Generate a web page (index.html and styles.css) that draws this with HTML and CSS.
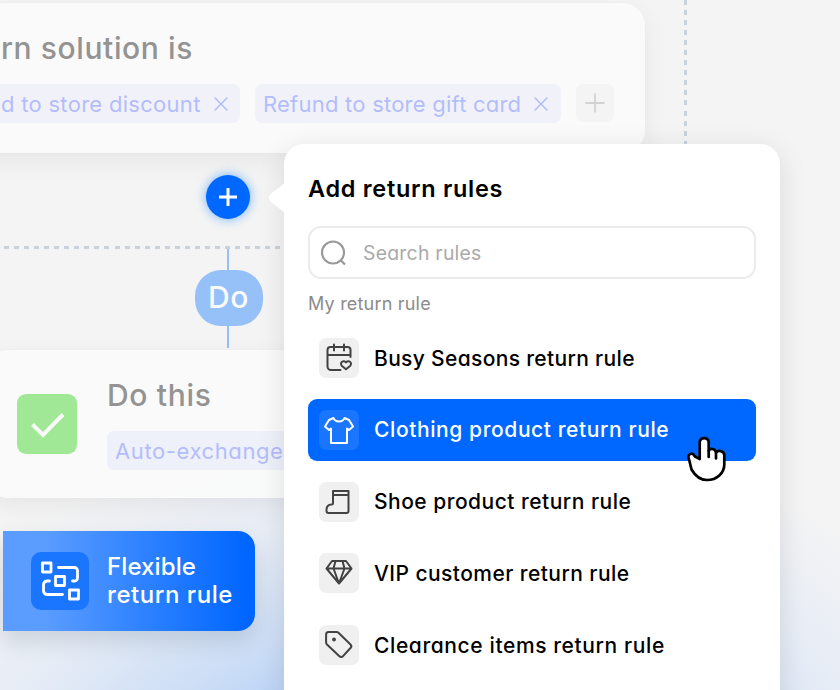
FILE: index.html
```html
<!DOCTYPE html>
<html lang="en">
<head>
<meta charset="utf-8">
<title>Return rules</title>
<link rel="stylesheet" href="styles.css">
</head>
<body>
<main class="canvas">
  <div class="line-v"></div>
  <section class="node solution">
    <h2 class="node-title t-sol">rn solution is</h2>
    <div class="chips">
      <span class="chip"><span class="t-c1">d to store discount</span><svg width="16" height="16" viewBox="0 0 16 16"><path d="M1.5 1.5l13 13M14.5 1.5l-13 13"/></svg></span>
      <span class="chip"><span class="t-c2">Refund to store gift card</span><svg width="16" height="16" viewBox="0 0 16 16"><path d="M1.5 1.5l13 13M14.5 1.5l-13 13"/></svg></span>
      <span class="chip-add"><svg width="20" height="20" viewBox="0 0 20 20"><path d="M10 .5v19M.5 10h19"/></svg></span>
    </div>
  </section>
  <div class="line-h"></div>
  <div class="stem"></div>
  <div class="add"><svg width="18" height="18" viewBox="0 0 18 18"><path d="M9 0v18M0 9h18"/></svg></div>
  <div class="do"><span class="t-do">Do</span></div>
  <section class="node action">
    <div class="check"><svg width="60" height="60" viewBox="0 0 60 60"><path d="M15.500 30.500L26 41l20-20.500"/></svg></div>
    <div class="action-body">
      <h2 class="node-title t-this">Do this</h2>
      <span class="chip"><span class="t-c3">Auto-exchange</span></span>
    </div>
  </section>
  <div class="banner">
    <div class="banner-icon">
      <svg width="58" height="58" viewBox="0 0 58 58"><path d="M11.500 11h8.500v9h-8.500zM24.500 24.500h9v9h-9zM38.500 38h9v9h-9zM27.500 15.500H43.500a3 3 0 0 1 3 3v7a3 3 0 0 1-3 3.500H41.500M18.500 29H16a4 4 0 0 0-3.500 4v6a4 4 0 0 0 4 3.500H31.500"/></svg>
    </div>
    <p class="banner-text"><span class="t-flex">Flexible</span><span class="t-rr">return rule</span></p>
  </div>

  <aside class="popover">
    <svg class="pointer" width="18" height="32" viewBox="0 0 18 32"><path d="M18 1L4 11.500Q-.5 16 4 20L18 31z"/></svg>
    <h1 class="title"><span class="t-title">Add return rules</span></h1>
    <div class="search">
      <svg width="28" height="28" viewBox="0 0 28 28"><circle cx="13" cy="13.500" r="11"/><path d="M20.500 21l4.500 4.500"/></svg>
      <span class="t-search">Search rules</span>
    </div>
    <p class="label"><span class="t-label">My return rule</span></p>
    <ul class="rules">
      <li class="rule">
        <span class="icon"><svg width="40" height="40" viewBox="0 0 40 40"><path d="M31.500 19v-7a3 3 0 0 0-3-3h-17a3 3 0 0 0-3 3v16.500a3.500 3.500 0 0 0 3.500 3.500h9.500M8.500 17h23M15 6.500v6M25 6.500v6"/><path d="M27 31.300l-4.300-3.600c-2.400-3 2-6.300 4.300-3.200 2.300-3.100 6.700.2 4.300 3.200z"/></svg></span>
        <span class="t-r1">Busy Seasons return rule</span>
      </li>
      <li class="rule active">
        <span class="icon"><svg width="40" height="40" viewBox="0 0 40 40"><path d="M14.500 8l-4.500 2-4 6.500 4 3.500 2-1.500V33h16V18.500l2 1.500 4-3.500-4-6.500-4.500-2c-1.500 4.600-9.500 4.600-11 0z"/></svg></span>
        <span class="t-r2">Clothing product return rule</span>
      </li>
      <li class="rule">
        <span class="icon"><svg width="40" height="40" viewBox="0 0 40 40"><path d="M14 9h15.500V29a2 2 0 0 1-2 2H9.500a2 2 0 0 1-2-2v-1c0-3.500 2-5.500 5-5.500 1 0 1.500-.5 1.500-1.500zM14 13h15.500"/></svg></span>
        <span class="t-r3">Shoe product return rule</span>
      </li>
      <li class="rule">
        <span class="icon"><svg width="40" height="40" viewBox="0 0 40 40"><path d="M13 8h14l5.500 7.500L20 30.500 7.500 15.500zM7.500 15.500h25M16.500 8l-2 7.500L20 30.500l5.500-15-2-7.500"/></svg></span>
        <span class="t-r4">VIP customer return rule</span>
      </li>
      <li class="rule">
        <span class="icon"><svg width="40" height="40" viewBox="0 0 40 40"><path d="M9.500 7H17.500a3 3 0 0 1 2 .8L31.500 19.500a2.500 2.500 0 0 1 0 3.500l-7.500 8.200a2.500 2.500 0 0 1-3.600 0L8 19.500a3 3 0 0 1-.9-2V9.500A2.500 2.500 0 0 1 9.500 7z"/><circle class="dot" cx="15" cy="14.500" r="1.900"/></svg></span>
        <span class="t-r5">Clearance items return rule</span>
      </li>
    </ul>
  </aside>
  <svg class="cursor" width="44" height="50" viewBox="0 0 44 50"><path d="M15.700 27V10.300c0-5.700 9-5.700 9 0V19c1.200-3.400 6.800-2.600 7.300 1.700 1.800-2.900 8.300-2 8.300 2.600v9.200c0 8.500-7.500 15.500-17.300 15.500-7 0-12-4.500-15.500-10.500L5.200 28C2.700 22 8 19.500 11 24.500z"/><path class="fingers" d="M24.700 25v-6M32 26.500v-5"/></svg>
</main>
</body>
</html>
```
FILE: styles.css
```css
* { box-sizing: border-box; }
body {
  margin: 0;
  font-family: Inter, "Open Sans", sans-serif;
  font-feature-settings: "cv11";
  white-space: nowrap;
}
h1, h2, p, ul { margin: 0; padding: 0; }
svg { display: block; flex: none; fill: none; stroke: currentColor; }

.canvas {
  position: relative;
  width: 840px;
  height: 690px;
  overflow: hidden;
  background: radial-gradient(ellipse 600px 400px at 430px 820px, #8bb8fa 0%, #a5c7f8 25%, #cbddf6 50%, #e6ecf6 74%, #f4f4f4 100%);
}

/* Diagram */
.line-v {
  position: absolute; left: 684px; top: 0; width: 3px; height: 150px;
  background: repeating-linear-gradient(#c9d1db 0 5px, transparent 5px 10.050px);
}
.line-h {
  position: absolute; left: 4px; top: 246px; width: 284px; height: 3px;
  background: repeating-linear-gradient(90deg, #c9d1db 0 5px, transparent 5px 10.050px);
}
.stem { position: absolute; left: 227px; top: 249px; width: 2px; height: 99px; background: #95c1f8; }
.node {
  position: absolute;
  background: rgba(251, 251, 251, .82);
  box-shadow: 0 8px 26px rgba(0, 0, 0, .06), 0 0 2px rgba(0, 0, 0, .04);
}
.node-title { font-weight: 500; font-size: 30px; line-height: 40px; color: #939393; }
.solution { left: -30px; top: 3px; width: 675px; height: 150px; border-radius: 22px; padding: 25px 0 0 31px; }
.chips { display: flex; gap: 15px; margin-top: 16px; }
.chip {
  display: flex; align-items: center; justify-content: space-between;
  width: 306px; height: 39px; padding: 0 12px 0 8px;
  border-radius: 7px; background: #f1f2f9; color: #b4bdfb; font-size: 22px;
}
.chips .chip:first-child { width: 254px; margin-left: -15px; padding: 0 11px 0 15px; }
.chip svg { stroke-width: 1.500; }
.chip-add {
  display: flex; align-items: center; justify-content: center;
  width: 38px; height: 38px; border-radius: 7px; background: #f4f4f4; color: #d2d2d2;
}
.chip-add svg { stroke-width: 1.800; }
.add {
  position: absolute; left: 206px; top: 175px; width: 44px; height: 44px; border-radius: 50%;
  display: flex; align-items: center; justify-content: center;
  background: #0068ff; color: #fff; stroke-width: 3;
  box-shadow: 0 0 11px rgba(40, 140, 255, .65);
}
.do {
  position: absolute; left: 195px; top: 270px; width: 68px; height: 56px; border-radius: 26px;
  display: flex; align-items: center; padding: 0 0 2px 13px;
  background: #95c1f8; color: #fafafa; font-size: 30px; font-weight: 500;
}
.action { left: -10px; top: 350px; width: 500px; height: 148px; border-radius: 18px; display: flex; padding: 0 0 0 27px; }
.check { width: 60px; height: 60px; margin-top: 44px; border-radius: 9px; background: #a0e896; color: #fafafa; stroke-width: 4; }
.action-body { padding: 25px 0 0 30px; }
.action-body .chip { margin-top: 16px; background: #eef0fa; }
.banner {
  position: absolute; left: 3px; top: 531px; width: 252px; height: 100px; border-radius: 0 17px 17px 0;
  display: flex; align-items: center; gap: 18px; padding-left: 28px;
  background: linear-gradient(90deg, #5a9cff 17%, #0066ff 97%); color: #fff;
  box-shadow: 0 10px 22px rgba(50, 70, 90, .17);
}
.banner-icon { width: 58px; height: 58px; border-radius: 10px; background: #1a75ff; }
.banner-icon svg { stroke-width: 2.800; stroke-linecap: round; stroke-linejoin: round; }
.banner-text { font-size: 24px; line-height: 28.500px; font-weight: 500; }
.banner-text span { display: block; }

/* Popover */
.popover {
  position: absolute; left: 284px; top: 144px; width: 496px; height: 580px;
  padding: 24px 24px 0; border-radius: 20px; background: #fff;
  box-shadow: 0 6px 28px rgba(0, 0, 0, .11);
}
.pointer { position: absolute; left: -17px; top: 38px; fill: #fff; stroke: none; }
.title { font-size: 23.500px; font-weight: 600; line-height: 41px; color: #000; }
.search {
  display: flex; align-items: center; gap: 15px; height: 53px; margin-top: 17px; padding-left: 10px;
  border: 2px solid #ebebeb; border-radius: 13px; color: #aaa; font-size: 19.400px;
}
.search svg { color: #999; stroke-width: 2.200; }
.label { margin-top: 11px; font-size: 18px; line-height: 27px; color: #8b8b8b; }
.rules { list-style: none; display: flex; flex-direction: column; gap: 9.800px; margin-top: 10px; }
.rule {
  display: flex; align-items: center; gap: 15px; height: 62px; padding-left: 11px;
  border-radius: 9px; color: #000; font-size: 21px; font-weight: 500;
}
.icon { width: 40px; height: 40px; border-radius: 7px; background: #f0f0f0; color: #424242; }
.icon svg { stroke-width: 2; stroke-linejoin: round; stroke-linecap: round; }
.dot { fill: currentColor; stroke: none; }
.active { background: #0068ff; color: #fff; }
.active .icon { background: #1a75ff; color: #fff; }
.cursor { position: absolute; left: 684px; top: 432px; fill: #fff; stroke: #000; stroke-width: 2.700; stroke-linejoin: round; stroke-linecap: round; }

/* Tracking */
.t-sol { letter-spacing: .600px; }
.t-c1 { letter-spacing: .29px; }
.t-c2 { letter-spacing: .23px; }
.t-c3 { letter-spacing: .6px; }
.t-do { letter-spacing: .700px; }
.t-this { letter-spacing: .680px; }
.t-flex { letter-spacing: .1px; }
.t-rr { letter-spacing: .56px; }
.t-title { letter-spacing: .7px; }
.t-search { letter-spacing: .25px; }
.t-label { letter-spacing: .2px; }
.t-r1 { letter-spacing: .34px; }
.t-r2 { letter-spacing: .6px; }
.t-r3 { letter-spacing: .49px; }
.t-r4 { letter-spacing: .44px; }
.t-r5 { letter-spacing: .61px; }
```
